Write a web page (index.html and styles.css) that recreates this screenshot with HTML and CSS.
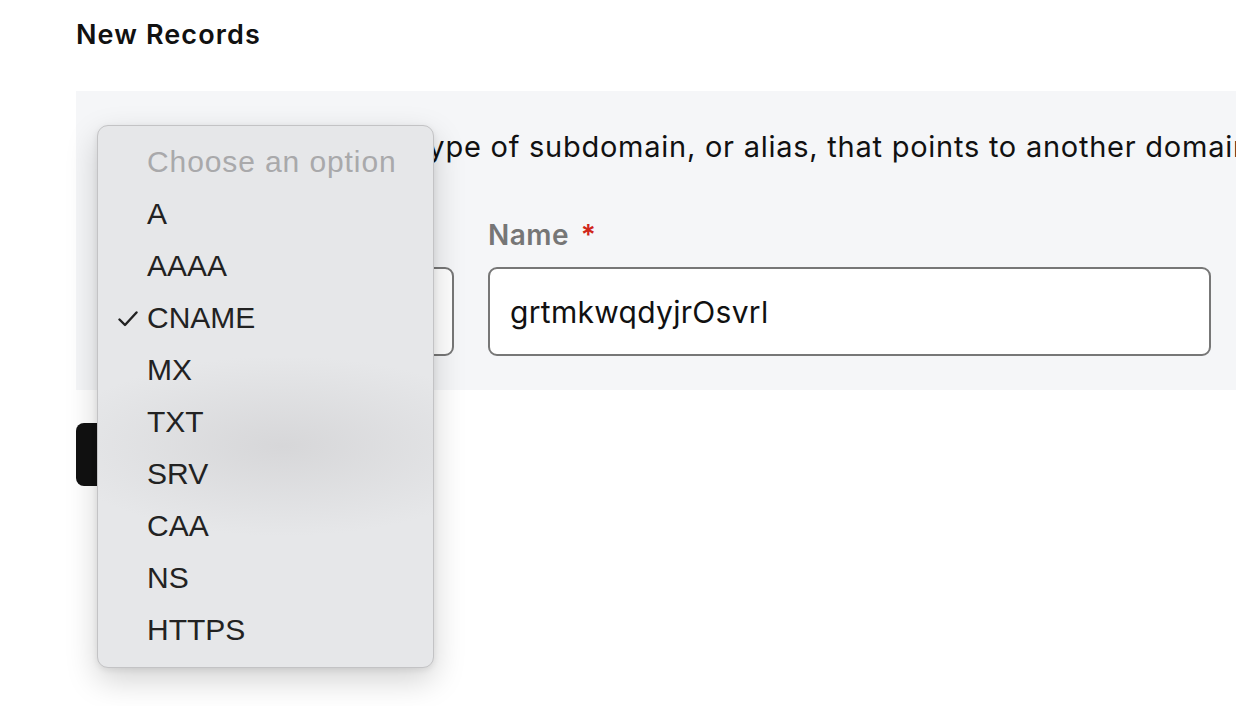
FILE: index.html
```html
<!DOCTYPE html>
<html lang="en">
<head>
  <meta charset="UTF-8" />
  <meta name="viewport" content="width=device-width, initial-scale=1.0"/>
  <title>New Records</title>
  <link rel="stylesheet" href="styles.css">
</head>
<body>
  <div class="page">
    <h2 class="title">New Records</h2>

    <div class="panel">
      <p class="hint">A CNAME record is a type of subdomain, or alias, that points to another domain name.</p>

      <div class="fields">
        <div class="field field-type">
          <label class="field-label">Type <span class="req">*</span></label>
          <div class="box"></div>
        </div>
        <div class="field field-name">
          <label class="field-label" for="name">Name <span class="req">*</span></label>
          <input class="box" id="name" type="text" value="grtmkwqdyjrOsvrl">
        </div>
      </div>
    </div>

    <button class="save">Save</button>

    <ul class="menu">
      <li class="placeholder">Choose an option</li>
      <li>A</li>
      <li>AAAA</li>
      <li class="checked">
        <svg class="tick" width="20" height="16" viewBox="0 0 20 16"><path d="M1.5 8.5 L7 14 L18.5 1.5" fill="none" stroke="#222" stroke-width="2.4" stroke-linecap="round" stroke-linejoin="round"/></svg>
        CNAME
      </li>
      <li>MX</li>
      <li>TXT</li>
      <li>SRV</li>
      <li>CAA</li>
      <li>NS</li>
      <li>HTTPS</li>
    </ul>
  </div>
</body>
</html>
```

FILE: styles.css
```css
html, body {
  margin: 0;
  height: 100%;
  overflow: hidden;
  background: #fff;
}
body {
  font-family: "Inter", "Open Sans", sans-serif;
  color: #111;
}
.page {
  position: relative;
  padding-left: 76px;
}
.title {
  margin: 0;
  padding-top: 17px;
  font-size: 27px;
  font-weight: 600;
  line-height: 36px;
  letter-spacing: 1.1px;
}
.panel {
  margin-top: 38px;
  width: 1160px;
  height: 299px;
  box-sizing: border-box;
  background: #f5f6f8;
  padding: 36px 0 0 21px;
}
.hint {
  margin: 0;
  font-size: 29px;
  line-height: 40px;
  letter-spacing: 0.75px;
  text-indent: 10px;
  white-space: nowrap;
}
.fields {
  display: flex;
  gap: 34px;
  margin-top: 50px;
}
.field {
  display: flex;
  flex-direction: column;
}
.field-type { width: 357px; }
.field-name { width: 723px; }
.field-label {
  font-size: 28px;
  font-weight: 600;
  color: #767676;
  line-height: 36px;
  letter-spacing: 0.5px;
  margin-bottom: 14px;
}
.req { color: #d0261c; margin-left: 4px; }
.box {
  box-sizing: border-box;
  height: 89px;
  border: 2px solid #777;
  border-radius: 9px;
  background: #fff;
  font: inherit;
  font-size: 30px;
  letter-spacing: 0.3px;
  color: #111;
  padding: 0 20px;
  outline: none;
}
.save {
  display: block;
  margin-top: 33px;
  width: 200px;
  height: 63px;
  border: 0;
  border-radius: 8px;
  background: #111;
  color: #fff;
  font: inherit;
  font-size: 20px;
}
.menu {
  position: absolute;
  left: 97px;
  top: 125px;
  width: 337px;
  box-sizing: border-box;
  margin: 0;
  padding: 10px 0 11px;
  list-style: none;
  border: 1px solid #c3c3c5;
  border-radius: 11px;
  background:
    radial-gradient(ellipse 230px 90px at 185px 320px, rgba(212, 212, 214, 0.85), rgba(230, 231, 233, 0)),
    #e6e7e9;
  box-shadow: 0 12px 32px rgba(0, 0, 0, 0.18), 0 2px 6px rgba(0, 0, 0, 0.08);
  font-family: "Liberation Sans", Arial, sans-serif;
  font-size: 30px;
  color: #222;
}
.menu li {
  position: relative;
  height: 52px;
  line-height: 52px;
  padding-left: 49px;
}
.menu .placeholder {
  color: #a9a9ab;
  letter-spacing: 0.9px;
}
.tick {
  position: absolute;
  left: 20px;
  top: 19px;
}
```
